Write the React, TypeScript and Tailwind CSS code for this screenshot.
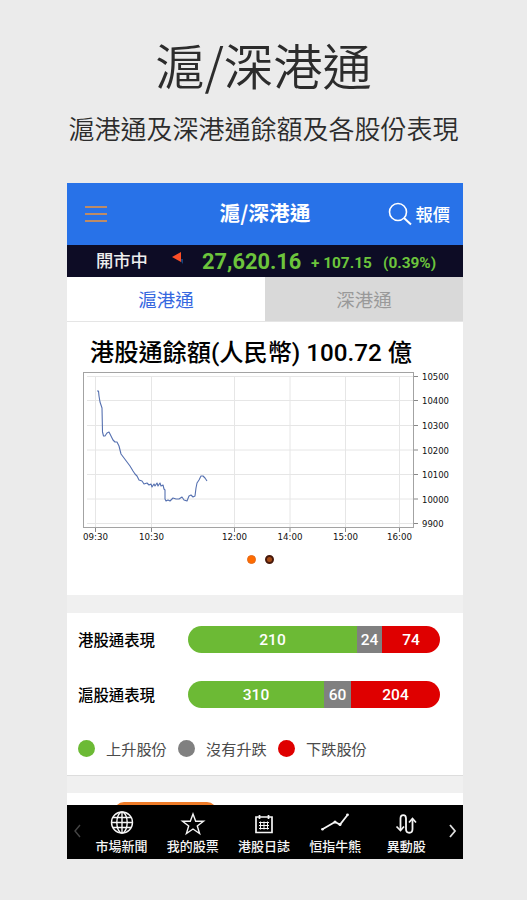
import type { ReactNode } from "react";

const yTicks = [
  { y: 4, label: "10500" },
  { y: 28, label: "10400" },
  { y: 53, label: "10300" },
  { y: 77.5, label: "10200" },
  { y: 102, label: "10100" },
  { y: 126.5, label: "10000" },
  { y: 151, label: "9900" },
];

const xTicks = [
  { x: 12.5, label: "09:30" },
  { x: 68.5, label: "10:30" },
  { x: 151.5, label: "12:00" },
  { x: 207, label: "14:00" },
  { x: 262.5, label: "15:00" },
  { x: 316.5, label: "16:00" },
];

const linePoints =
  "14,19 15.5,19 16,24 17,30 19,36 19.5,60 20.5,64 22,64 24,61 26,60 28,64 30,68 32,70 34,70 36,74 38,82 41,86 44,90 47,94 50,99 52,102 54,104 56,108 59,109 61,112 64,111 66,113 68,112 69,115 71,112 72,114 74,111 75,114 77,111 78,114 80,113 81,117 82,118 82,127 83,129 85,128 87,129 90,126 93,127 96,127 99,125 101,128 104,129 106,124 108,123 110,125 112,124 113,116 114,111 116,108 118,104 120,104 122,106 124,109";

function Chart() {
  return (
    <svg className="mt-[2px] ml-4 block" width="375" height="175" viewBox="0 0 375 175" fill="none">
      {yTicks.map((t) => (
        <g key={t.label}>
          <line x1="4" x2="330" y1={t.y + 0.5} y2={t.y + 0.5} stroke="#e6e6e6" />
          <line x1="331" x2="335" y1={t.y + 0.5} y2={t.y + 0.5} stroke="#888" />
          <text
            x="339"
            y={t.y + 4}
            textLength={t.label.length * 5.4}
            lengthAdjust="spacingAndGlyphs"
            fill="#111"
            className="font-['DejaVu_Sans'] text-[8.5px]"
          >
            {t.label}
          </text>
        </g>
      ))}
      {xTicks.map((t) => (
        <g key={t.label}>
          <line x1={t.x} x2={t.x} y1="4" y2="155" stroke="#e6e6e6" />
          <line x1={t.x} x2={t.x} y1="156" y2="160" stroke="#888" />
          <text
            x={t.x - 12.5}
            y="168"
            textLength="25"
            lengthAdjust="spacingAndGlyphs"
            fill="#111"
            className="font-['DejaVu_Sans'] text-[8.5px]"
          >
            {t.label}
          </text>
        </g>
      ))}
      <rect x="0.5" y="0.5" width="330" height="155" stroke="#a3a3a3" />
      <polyline points={linePoints} stroke="#5570b0" strokeWidth="1.1" strokeLinejoin="round" />
    </svg>
  );
}

type BarProps = { label: string; up: number; flat: number; down: number; widths: string };

function PerformanceBar({ label, up, flat, down, widths }: BarProps) {
  return (
    <div className="flex h-[27px] items-center">
      <span className="w-[121px] pl-[11px] text-[15.4px] font-medium text-black">{label}</span>
      <div
        className={`grid h-full w-[252px] overflow-hidden rounded-full text-center font-[Roboto] text-[15.5px] leading-[28px] font-medium text-white ${widths}`}
      >
        <span className="bg-[#6cba35]">{up}</span>
        <span className="bg-[#808080]">{flat}</span>
        <span className="bg-[#df0000]">{down}</span>
      </div>
    </div>
  );
}

function NavItem({ label, children }: { label: string; children: ReactNode }) {
  return (
    <div className="flex w-[71.2px] shrink-0 flex-col items-center">
      <svg width="28" height="26" viewBox="0 0 28 26" fill="none" stroke="#f5f5f5" strokeWidth="1.4">
        {children}
      </svg>
      <span className="mt-[1px] text-[13px] leading-[18px] font-medium whitespace-nowrap">{label}</span>
    </div>
  );
}

export default function App() {
  return (
    <div className="flex h-[900px] w-[527px] flex-col items-center bg-[#ebebeb] font-['Noto_Sans_CJK_TC',sans-serif]">
      <h1 className="mt-[32px] h-[64px] text-[49.3px] leading-[64px] font-[350] text-[#2c2c2c]">滬/深港通</h1>
      <p className="mt-[15px] h-[34px] text-[26px] leading-[34px] font-[350] whitespace-nowrap text-[#2c2c2c]">
        滬港通及深港通餘額及各股份表現
      </p>

      <div className="mt-[38px] ml-[3px] flex h-[676px] w-[396px] flex-col overflow-hidden bg-[#f0f0f0]">
        <header className="grid h-[62px] shrink-0 grid-cols-[1fr_auto_1fr] items-center bg-[#2872e8] text-white">
          <svg className="ml-[17px]" width="24" height="18" viewBox="0 0 24 18">
            <path d="M1 2h22M1 9h22M1 16h22" stroke="#bd8b66" strokeWidth="2" />
          </svg>
          <span className="pb-[2px] text-[20.7px] font-bold">滬/深港通</span>
          <div className="mr-[13px] flex items-center justify-end gap-[3px]">
            <svg width="24" height="24" viewBox="0 0 24 24" fill="none" stroke="white" strokeWidth="1.6">
              <circle cx="10" cy="10" r="8.5" />
              <path d="m16 16 7 6.5" strokeWidth="2" />
            </svg>
            <span className="pb-[1px] text-[17.3px] font-medium">報價</span>
          </div>
        </header>

        <div className="flex h-8 shrink-0 items-center bg-[#0d0c25] pt-[2px] font-[Roboto,'Noto_Sans_CJK_TC'] font-bold text-[#6cc43c]">
          <span className="ml-[29px] w-[76px] text-[17.3px] font-medium text-[#eeeeee]">開市中</span>
          <svg width="12" height="15" viewBox="0 0 12 15" className="mb-[8px]">
            <path d="M7 8 11 13 11 8Z" fill="#194076" />
            <path d="M0 6 9 1v10Z" fill="#fb4e27" />
          </svg>
          <span className="ml-[18px] w-[109px] text-[21.8px]">27,620.16</span>
          <span className="w-[72px] pt-[3px] text-[15.4px]">+ 107.15</span>
          <span className="pt-[3px] text-[15.4px]">(0.39%)</span>
        </div>

        <div className="grid h-[45px] shrink-0 grid-cols-[198px_198px] border-b border-[#e5e5e5] text-center text-[18.5px] leading-[44px]">
          <div className="bg-white text-[#3567df]">滬港通</div>
          <div className="bg-[#d9d9d9] text-[#999999]">深港通</div>
        </div>

        <section className="h-[273px] shrink-0 bg-white pt-[14px]">
          <h2 className="ml-[23px] h-[34px] font-[Roboto,'Noto_Sans_CJK_TC'] text-[24.2px] leading-[34px] font-medium whitespace-nowrap text-black">
            港股通餘額(人民幣) 100.72 億
          </h2>
          <Chart />
          <div className="mt-[8px] flex gap-[9px] pl-[180px]">
            <span className="size-[9px] rounded-full border border-[#e36a19] bg-[#ff6b00]" />
            <span className="size-[9px] rounded-full border-2 border-[#47190b] bg-[#a64c18]" />
          </div>
        </section>

        <section className="mt-[18px] h-[163px] shrink-0 border-b border-[#dddddd] bg-white pt-[13px]">
          <PerformanceBar label="港股通表現" up={210} flat={24} down={74} widths="grid-cols-[169px_25px_58px]" />
          <div className="h-[28px]" />
          <PerformanceBar label="滬股通表現" up={310} flat={60} down={204} widths="grid-cols-[136px_27px_89px]" />
          <div className="mt-[27px] flex h-[27px] items-center pl-[11px] text-[15.2px] text-[#4b4b4b]">
            <span className="mr-[11px] size-[17px] rounded-full bg-[#6cba35]" />
            <span className="w-[72px]">上升股份</span>
            <span className="mr-[11px] size-[17px] rounded-full bg-[#808080]" />
            <span className="w-[72px]">沒有升跌</span>
            <span className="mr-[11px] size-[17px] rounded-full bg-[#df0000]" />
            <span>下跌股份</span>
          </div>
        </section>

        <section className="mt-[17px] h-[12px] shrink-0 overflow-hidden bg-white pt-[9px]">
          <div className="ml-[47px] h-[34px] w-[103px] rounded-[10px] bg-[#ee7b28]" />
        </section>

        <nav className="flex h-[54px] shrink-0 items-start bg-black pt-[5px] text-[#f5f5f5]">
          <svg className="mt-[14px] mr-[5px] ml-[7px] shrink-0" width="7" height="14" viewBox="0 0 7 14" fill="none" stroke="#454545" strokeWidth="1.4">
            <path d="M6 1 1 7l5 6" />
          </svg>
          <NavItem label="市場新聞">
            <circle cx="14" cy="12.5" r="10.5" />
            <ellipse cx="14" cy="12.5" rx="5.2" ry="10.5" />
            <path d="M14 2v21M3.5 12.5h21M5 7.5h18M5 17.5h18" />
          </NavItem>
          <NavItem label="我的股票">
            <path d="m14 4 2.7 7.3h7.8l-6.2 4.700 2.300 7.500-6.600-4.500-6.600 4.500 2.300-7.500-6.200-4.700h7.800Z" />
          </NavItem>
          <NavItem label="港股日誌">
            <path d="M6 7h16v15.500H6ZM9.500 5v4M18.500 5v4" strokeWidth="1.7" />
            <path d="M9 12.500h10M9 15.500h10M9 18.500h10M10.500 11.500v8M14 11.500v8M17.500 11.500v8" strokeWidth="1" />
          </NavItem>
          <NavItem label="恒指牛熊">
            <path d="m1 19.500 13-7.500 5 2.500 7.500-9.500" strokeWidth="1.8" />
            <g fill="#f5f5f5" stroke="none">
              <circle cx="1.500" cy="19.300" r="1.300" />
              <circle cx="14" cy="12" r="1.500" />
              <circle cx="19" cy="14.500" r="1.500" />
              <circle cx="26.500" cy="4.800" r="1.400" />
            </g>
          </NavItem>
          <NavItem label="異動股">
            <path d="M8.500 20V8.500c0-4.500 5.500-4.500 5.500 0V19c0 5 6.500 5 6.500 0V9.500" strokeWidth="1.8" />
            <path d="m4.500 16.500 4 4 3.500-4M17 12.500l3.500-4 3.500 4" strokeWidth="1.700" />
          </NavItem>
          <svg className="mt-[14px] ml-[7px] shrink-0" width="8" height="14" viewBox="0 0 8 14" fill="none" stroke="#dddddd" strokeWidth="1.8">
            <path d="m1 1 5 6-5 6" />
          </svg>
        </nav>
      </div>
    </div>
  );
}
